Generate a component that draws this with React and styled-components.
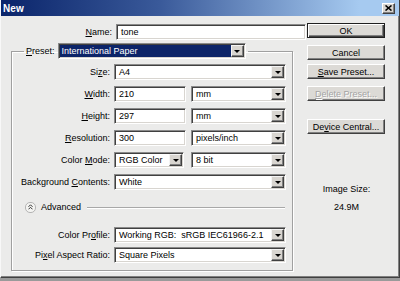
import React from 'react';
import styled, { createGlobalStyle } from 'styled-components';

const Global = createGlobalStyle`
  html, body { margin: 0; padding: 0; background: #9a9a9a; }
  body {
    font-family: "Liberation Sans", Arial, sans-serif;
    font-size: 9px;
    color: #000;
  }
  #root { width: 400px; height: 281px; overflow: hidden; }
`;

const Window = styled.div`
  box-sizing: border-box;
  width: 400px;
  height: 278px;
  background: #ebebea;
  border-left: 1px solid #f8f8f8;
  border-right: 1px solid #404040;
  border-bottom: 1px solid #404040;
  box-shadow: inset -1px -1px 0 #808080;
  display: flex;
  flex-direction: column;
  overflow: hidden;
`;

const TitleBar = styled.div`
  height: 16px;
  flex: none;
  background: linear-gradient(to right, #0a246a 0%, #3a5a9a 40%, #a6caf0 90%);
  display: flex;
  align-items: center;
  justify-content: space-between;
  padding: 0 4px 0 2px;
`;

const Title = styled.span`
  color: #fff;
  font-weight: bold;
  font-size: 10px;
  letter-spacing: 0.1px;
`;

const CloseButton = styled.div`
  box-sizing: border-box;
  width: 13px;
  height: 11px;
  background: #d8d5d0;
  border: 1px solid;
  border-color: #fff #404040 #404040 #fff;
  box-shadow: inset -1px -1px 0 #808080;
  display: flex;
  align-items: center;
  justify-content: center;
`;

const Body = styled.div`
  flex: 1;
  display: flex;
  padding-top: 7px;
`;

const LeftPane = styled.div`
  width: 296px;
  padding-left: 10px;
  display: flex;
  flex-direction: column;
`;

const NameRow = styled.div`
  display: grid;
  grid-template-columns: 101px 190px;
  column-gap: 4px;
  align-items: center;
  margin-top: 1px;
`;

const Label = styled.label`
  text-align: right;
  white-space: nowrap;
  color: #000;
`;

const Fieldset = styled.fieldset`
  box-sizing: border-box;
  width: 282px;
  margin: 3px 0 0 0;
  padding: 0 0 7px 0;
  border: 1px solid #a0a0a0;
  box-shadow: 1px 1px 0 #fff, inset 1px 1px 0 #fff;
  min-width: 0;
`;

const Legend = styled.legend`
  margin-left: 12px;
  padding: 0 2px;
  display: flex;
  align-items: center;
  gap: 3px;
`;

const Grid = styled.div`
  display: grid;
  grid-template-columns: 98px 172px;
  column-gap: 4px;
  row-gap: ${p => p.$gap}px;
  align-items: center;
  padding-top: ${p => p.$top || 0}px;
`;

const Pair = styled.div`
  display: flex;
  gap: ${p => p.$gap}px;
`;

const Sunken = styled.div`
  box-sizing: border-box;
  height: 16px;
  width: ${p => (p.$w ? `${p.$w}px` : '100%')};
  background: #fff;
  border: 1px solid;
  border-color: #8a8a8a #fff #fff #8a8a8a;
  box-shadow: inset 1px 1px 0 #404040, inset -1px -1px 0 #d8d5d0;
  display: flex;
  align-items: center;
  padding: 1px;
  overflow: hidden;
`;

const FieldText = styled.span`
  flex: 1;
  align-self: stretch;
  display: flex;
  align-items: center;
  padding-left: ${p => (p.$hl ? 2 : 3)}px;
  white-space: nowrap;
  overflow: hidden;
  background: ${p => (p.$hl ? '#0c2468' : 'transparent')};
  color: ${p => (p.$hl ? '#fff' : '#000')};
`;

const ArrowButton = styled.span`
  box-sizing: border-box;
  flex: none;
  width: 13px;
  height: 12px;
  background: #d8d5d0;
  border: 1px solid;
  border-color: #f4f4f4 #404040 #404040 #f4f4f4;
  box-shadow: inset -1px -1px 0 #808080;
  display: flex;
  align-items: center;
  justify-content: center;
  &::after {
    content: '';
    width: 0;
    height: 0;
    border-left: 3px solid transparent;
    border-right: 3px solid transparent;
    border-top: 3px solid #000;
    margin-top: 1px;
  }
`;

const AdvancedRow = styled.div`
  display: flex;
  align-items: center;
  height: 12px;
  margin: ${p => p.$top}px 7px ${p => p.$bottom}px 13px;
`;

const AdvancedIcon = styled.span`
  box-sizing: border-box;
  width: 11px;
  height: 11px;
  border-radius: 5px;
  border: 1px solid #b4b4b4;
  background: #f4f4f2;
  display: flex;
  align-items: center;
  justify-content: center;
  margin-right: 5px;
`;

const AdvancedText = styled.span`
  margin-right: 6px;
`;

const Etched = styled.span`
  flex: 1;
  height: 1px;
  background: #a8a8a8;
  box-shadow: 0 1px 0 #fff;
`;

const RightPane = styled.div`
  width: 78px;
  margin-left: 0;
  display: flex;
  flex-direction: column;
  align-items: stretch;
`;

const Button = styled.div`
  box-sizing: border-box;
  height: 15px;
  margin-top: ${p => p.$top}px;
  background: #dcdad6;
  border: 1px solid;
  border-color: ${p => (p.$default ? '#202020' : '#fff #404040 #404040 #fff')};
  box-shadow: ${p =>
    p.$default
      ? 'inset 1px 1px 0 #fff, inset -1px -1px 0 #404040, inset -2px -2px 0 #808080'
      : 'inset -1px -1px 0 #808080'};
  display: flex;
  align-items: center;
  justify-content: center;
  color: ${p => (p.$disabled ? '#a4a4a4' : '#000')};
  text-shadow: ${p => (p.$disabled ? '1px 1px 0 #fff' : 'none')};
  white-space: nowrap;
`;

const InfoText = styled.div`
  text-align: center;
  margin-top: ${p => p.$top}px;
  padding-left: 1px;
`;

const Select = ({ children, w, hl }) => (
  <Sunken $w={w}>
    <FieldText $hl={hl}>{children}</FieldText>
    <ArrowButton />
  </Sunken>
);

const Input = ({ children, w }) => (
  <Sunken $w={w}>
    <FieldText>{children}</FieldText>
  </Sunken>
);

export default function App() {
  return (
    <>
      <Global />
      <Window>
        <TitleBar>
          <Title>New</Title>
          <CloseButton>
            <svg width="7" height="6" viewBox="0 0 7 6">
              <path d="M0.5 0.5 L6.5 5.5 M6.5 0.5 L0.5 5.5" stroke="#000" strokeWidth="1.6" />
            </svg>
          </CloseButton>
        </TitleBar>
        <Body>
          <LeftPane>
            <NameRow>
              <Label><u>N</u>ame:</Label>
              <Input>tone</Input>
            </NameRow>
            <Fieldset>
              <Legend>
                <Label><u>P</u>reset:</Label>
                <Select w={188} hl>International Paper</Select>
              </Legend>
              <Grid $gap={6} $top={5}>
                <Label>Si<u>z</u>e:</Label>
                <Select>A4</Select>

                <Label><u>W</u>idth:</Label>
                <Pair $gap={5}>
                  <Input w={72}>210</Input>
                  <Select w={95}>mm</Select>
                </Pair>

                <Label><u>H</u>eight:</Label>
                <Pair $gap={5}>
                  <Input w={72}>297</Input>
                  <Select w={95}>mm</Select>
                </Pair>

                <Label><u>R</u>esolution:</Label>
                <Pair $gap={5}>
                  <Input w={72}>300</Input>
                  <Select w={95}>pixels/inch</Select>
                </Pair>

                <Label>Color <u>M</u>ode:</Label>
                <Pair $gap={7}>
                  <Select w={70}>RGB Color</Select>
                  <Select w={95}>8 bit</Select>
                </Pair>

                <Label>Background <u>C</u>ontents:</Label>
                <Select>White</Select>
              </Grid>

              <AdvancedRow $top={11} $bottom={14}>
                <AdvancedIcon>
                  <svg width="5" height="6" viewBox="0 0 5 6">
                    <path d="M0.5 2.8 L2.5 0.8 L4.5 2.8 M0.5 5.3 L2.5 3.3 L4.5 5.3" stroke="#333" strokeWidth="1" fill="none" />
                  </svg>
                </AdvancedIcon>
                <AdvancedText>Advanced</AdvancedText>
                <Etched />
              </AdvancedRow>

              <Grid $gap={4}>
                <Label>Color Pr<u>o</u>file:</Label>
                <Select>Working RGB:&nbsp; sRGB IEC61966-2.1</Select>

                <Label>Pi<u>x</u>el Aspect Ratio:</Label>
                <Select>Square Pixels</Select>
              </Grid>
            </Fieldset>
          </LeftPane>

          <RightPane>
            <Button $top={0} $default>OK</Button>
            <Button $top={7}>Cancel</Button>
            <Button $top={4}><span><u>S</u>ave Preset...</span></Button>
            <Button $top={7} $disabled><span><u>D</u>elete Preset...</span></Button>
            <Button $top={18}><span>De<u>v</u>ice Central...</span></Button>
            <InfoText $top={50}>Image Size:</InfoText>
            <InfoText $top={8}>24.9M</InfoText>
          </RightPane>
        </Body>
      </Window>
    </>
  );
}
